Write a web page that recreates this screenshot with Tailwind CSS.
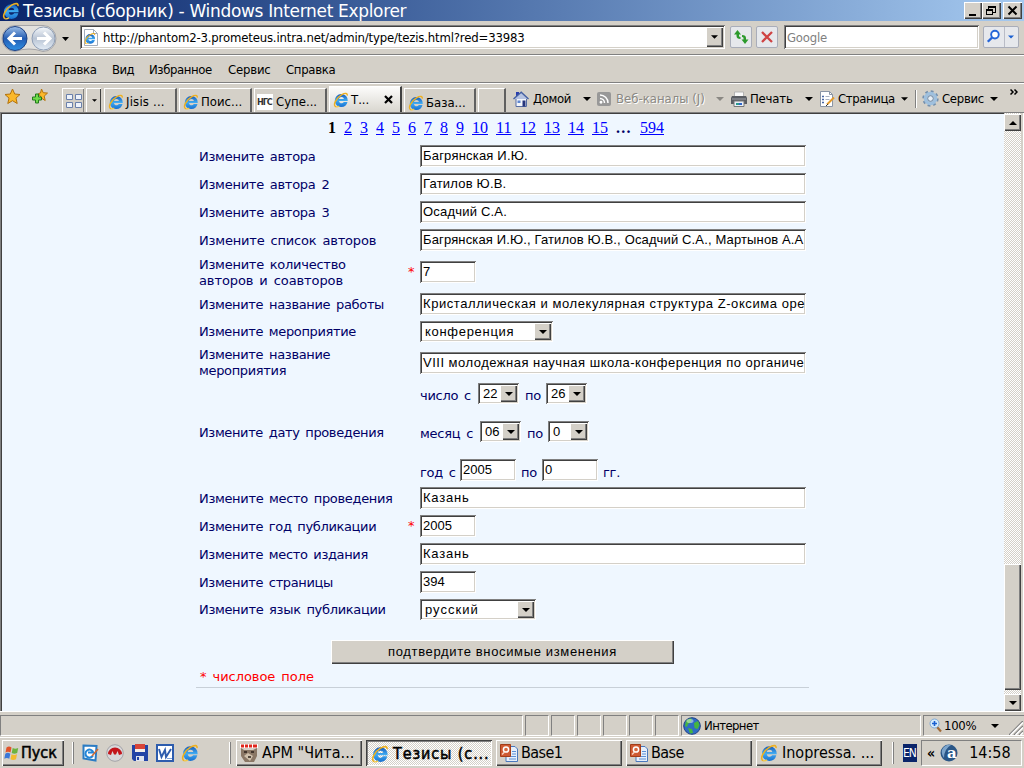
<!DOCTYPE html>
<html lang="ru">
<head>
<meta charset="utf-8">
<title>Тезисы (сборник)</title>
<script src="https://cdn.jsdelivr.net/npm/@tailwindcss/browser@4"></script>
</head>
<body class="w-[1024px] h-[768px] overflow-hidden bg-[#d4d0c8] text-black text-[13px] leading-4 whitespace-nowrap font-['DejaVu_Sans_Condensed','DejaVu_Sans',sans-serif]">

<!-- shared icons -->
<svg class="absolute w-0 h-0" xmlns="http://www.w3.org/2000/svg">
    <linearGradient id="ieblue" x2="0" y2="1"><stop stop-color="#1658b8"/><stop offset=".5" stop-color="#3fabf2"/><stop offset="1" stop-color="#176fd0"/></linearGradient>
    <symbol id="ie" viewBox="0 0 16 16">
        <path d="M8.300 2a6.500 6.500 0 0 1 6.500 7H6c.2 1.500 1.300 2.300 2.600 2.300 1 0 1.700-.4 2.200-1.200h3.700a6.500 6.500 0 0 1-6.200 5A6.500 6.500 0 0 1 8.300 2zM6 7h4.900C10.700 5.700 9.800 5 8.500 5S6.200 5.700 6 7z" fill="url(#ieblue)" fill-rule="evenodd"/>
        <path d="M3 14.900C-.8 13.800 3 6 8.500 2.800c3.500-2 6.300-1.900 5.700.8" fill="none" stroke="#eeb01f" stroke-width="1.400"/>
        <path d="M3 14.900c1 .2 2.200-.2 3.300-.9" fill="none" stroke="#f5c940" stroke-width="1.200"/>
    </symbol>
    <symbol id="down" viewBox="0 0 8 4"><path d="M0 0h8L4 4z" fill="currentColor"/></symbol>
    <symbol id="ppt" viewBox="0 0 18 18">
        <path d="M6 2.500h9l2.500 2.500V17.500H6z" fill="#e6effb" stroke="#4a78bd"/>
        <path d="M12 7.500h4M12 10h4M9 12.500h7M9 15h7" stroke="#5c8fd6"/>
        <path d="M.5.5h10v12H.5z" fill="#cf5a33" stroke="#a33c18"/>
        <circle cx="6" cy="5.500" r="2.600" fill="#d96a40" stroke="#fff" stroke-width="1.500"/>
        <path d="M2 10.500L4.500 8" stroke="#f8d2c0" stroke-width="1.500"/>
    </symbol>
</svg>

<!-- title bar -->
<div class="h-[21px] flex items-center pl-[2px] pr-[2px] bg-linear-to-r from-[#0a246a] to-[#a6caf0]">
    <svg class="w-[18px] h-[18px]"><use href="#ie"/></svg>
    <span class="ml-[3px] text-white text-[17px] leading-5 font-['DejaVu_Sans',sans-serif] tracking-[-0.33px]">Тезисы (сборник) - Windows Internet Explorer</span>
    <div class="ml-auto flex">
        <div class="w-[18px] h-[17px] bg-[#d4d0c8] shadow-[inset_1px_1px_#fff,inset_-1px_-1px_#404040,inset_-2px_-2px_#808080]">
            <svg class="w-[18px] h-[17px]"><path d="M5 12h7v2H5z"/></svg>
        </div>
        <div class="w-[19px] h-[17px] bg-[#d4d0c8] shadow-[inset_1px_1px_#fff,inset_-1px_-1px_#404040,inset_-2px_-2px_#808080]">
            <svg class="w-[19px] h-[17px]" fill="none" stroke="#000" shape-rendering="crispEdges"><path d="M6.500 7V4.500h7v6H11M6 5h8M4.500 7.500h6v5h-6zM4 8.500h7"/></svg>
        </div>
        <div class="ml-[2px] w-[19px] h-[17px] bg-[#d4d0c8] shadow-[inset_1px_1px_#fff,inset_-1px_-1px_#404040,inset_-2px_-2px_#808080]">
            <svg class="w-[19px] h-[17px]"><path d="M5.500 4.500l8 8M13.500 4.500l-8 8" stroke="#000" stroke-width="2"/></svg>
        </div>
    </div>
</div>

<!-- address bar -->
<div class="h-[34px] flex items-start pt-[4px] border-b border-[#808080]">
    <svg class="w-[75px] h-[28px] shrink-0" viewBox="0 0 75 28">
        <defs>
            <linearGradient id="back" x2="0" y2="1"><stop stop-color="#9fc0e8"/><stop offset=".5" stop-color="#235cb3"/><stop offset="1" stop-color="#2f90e4"/></linearGradient>
            <linearGradient id="fwd" x2="0" y2="1"><stop stop-color="#f5f8fc"/><stop offset=".5" stop-color="#b9c4d4"/><stop offset="1" stop-color="#e4edf6"/></linearGradient>
        </defs>
        <path d="M15 .5h28a13 13 0 0 1 0 26q-14-5-28 0a13 13 0 0 1 0-26z" fill="#e2e1de" stroke="#a5a5a8"/>
        <circle cx="15" cy="13.500" r="12" fill="url(#back)" stroke="#1d4185"/>
        <circle cx="43.500" cy="13.500" r="11.500" fill="url(#fwd)" stroke="#8d9db5"/>
        <path d="M22 13.500H10M15 7.500l-6 6 6 6" fill="none" stroke="#fff" stroke-width="3"/>
        <path d="M37 13.500h12M44 7.500l6 6-6 6" fill="none" stroke="#fff" stroke-width="3"/>
        <path d="M62 12h7l-3.500 4z"/>
    </svg>
    <div class="ml-[5px] w-[645px] h-[24px] p-[2px] flex items-center bg-white shadow-[inset_1px_1px_#808080,inset_-1px_-1px_#fff,inset_2px_2px_#404040,inset_-2px_-2px_#d4d0c8]">
        <svg class="ml-[1px] w-[16px] h-[17px]" viewBox="0 0 16 17">
            <path d="M1.500.5h9l4 4v12h-13z" fill="#fff" stroke="#a3adbb"/>
            <path d="M10.500.5v4h4" fill="none" stroke="#a3adbb"/>
            <use href="#ie" x="1" y="3.500" width="12" height="12"/>
        </svg>
        <span class="ml-[4px] pt-[2px] tracking-[-0.16px]">http://phantom2-3.prometeus.intra.net/admin/type/tezis.html?red=33983</span>
        <div class="ml-auto w-[17px] h-[20px] flex items-center justify-center bg-[#d4d0c8] shadow-[inset_1px_1px_#fff,inset_-1px_-1px_#404040,inset_-2px_-2px_#808080]">
            <svg class="w-[7px] h-[4px]"><use href="#down"/></svg>
        </div>
    </div>
    <div class="ml-[5px] mt-px w-[22px] h-[22px] rounded-[2px] border border-[#a9adb9] bg-[#e6e8ec]">
        <svg class="w-5 h-5" viewBox="0 0 20 20" fill="#2c9a2c">
            <path d="M3 7.500L6.500 3 10 7.500H8V9q0 1 1.500 1v2Q5.500 12 5.500 9V7.500z"/>
            <path d="M17.500 12.500L14 17l-3.500-4.500h2V11q0-1-1.500-1V8q4 0 4 3v1.500z"/>
        </svg>
    </div>
    <div class="ml-[4px] mt-px w-[22px] h-[22px] rounded-[2px] border border-[#a9adb9] bg-[#e6e8ec]">
        <svg class="w-5 h-5" viewBox="0 0 20 20"><path d="M5 5l10 10M15 5L5 15" stroke="#cf4343" stroke-width="2.300"/></svg>
    </div>
    <div class="ml-[6px] w-[195px] h-[24px] pl-[3px] pt-[2px] flex items-center bg-white text-[#808080] shadow-[inset_1px_1px_#808080,inset_-1px_-1px_#fff,inset_2px_2px_#404040,inset_-2px_-2px_#d4d0c8] tracking-[-0.2px]">Google</div>
    <div class="ml-[4px] mt-px w-[36px] h-[22px] flex items-center rounded-[2px] border border-[#a9adb9] bg-[#e6e8ec] text-[#1a5fd0]">
        <svg class="w-[21px] h-5 border-r border-[#b9bcc6]" viewBox="0 0 21 20" fill="none" stroke="#2565d8">
            <circle cx="11.500" cy="7.500" r="4" fill="#fff" stroke-width="2"/><path d="M8.500 10.500L4 15" stroke-width="2.500"/>
        </svg>
        <svg class="ml-[3px] w-[6px] h-[4px]"><use href="#down"/></svg>
    </div>
</div>

<!-- menu bar -->
<div class="h-[28px] pt-px flex items-center border-t border-t-white border-b border-b-[#808080]">
    <span class="ml-[7px] w-[47px] tracking-[-0.2px]">Файл</span>
    <span class="w-[58px] tracking-[-0.3px]">Правка</span>
    <span class="w-[37px] tracking-[-0.5px]">Вид</span>
    <span class="w-[79px] tracking-[-0.4px]">Избранное</span>
    <span class="w-[58px] tracking-[-0.2px]">Сервис</span>
    <span class="tracking-[-0.3px]">Справка</span>
</div>

<!-- tabs and command bar -->
<div class="h-[30px] flex items-end border-t border-white border-b border-b-[#808080]">
    <svg class="ml-[4px] mb-[7px] w-[17px] h-[17px]" viewBox="0 0 17 17"><path d="M8.500 1l2.200 5 5.300.5-4 3.600 1.200 5.400-4.700-2.800-4.700 2.800L5 10.100 1 6.500 6.300 6z" fill="#fbb829" stroke="#b3720c"/></svg>
    <svg class="ml-[10px] mb-[7px] w-[17px] h-[17px]" viewBox="0 0 17 17">
        <path d="M10.500 1l1.700 3.700 4.300.4-3.300 3 1 4.400-3.700-2.300-3-4.700 2-.5z" fill="#fbb829" stroke="#b3720c"/>
        <path d="M4.500 6h3v3h3v3h-3v3h-3v-3h-3V9h3z" fill="#6fdc4a" stroke="#237a1c"/>
    </svg>
    <div class="ml-[14px] w-[22px] h-[24px] flex items-center justify-center border-l border-t border-white shadow-[inset_-1px_0_#808080]">
        <svg class="w-[16px] h-[14px]" viewBox="0 0 16 14" fill="#eef3fb" stroke="#6a80ab"><path d="M.5.5h6v5h-6zM9.500.5h6v5h-6zM.5 8.500h6v5h-6zM9.500 8.500h6v5h-6z"/></svg>
    </div>
    <div class="ml-[2px] w-[15px] h-[24px] flex items-center justify-center border-l border-t border-white shadow-[inset_-1px_0_#404040]">
        <svg class="w-[5px] h-[3px]"><use href="#down"/></svg>
    </div>
    <div class="ml-[3px] w-[73px] h-[24px] pl-[3px] pt-[2px] flex items-center border-l border-t border-white border-r-2 border-r-[#606060]">
        <svg class="w-[16px] h-[16px] mr-[2px]"><use href="#ie"/></svg><span class="tracking-[0.2px]">Jisis ...</span>
    </div>
    <div class="ml-[2px] w-[73px] h-[24px] pl-[3px] pt-[2px] flex items-center border-l border-t border-white border-r-2 border-r-[#606060]">
        <svg class="w-[16px] h-[16px] mr-[2px]"><use href="#ie"/></svg>Поис...
    </div>
    <div class="ml-[2px] w-[73px] h-[24px] pl-[2px] pt-[2px] flex items-center border-l border-t border-white border-r-2 border-r-[#606060]">
        <span class="w-[16px] h-[16px] mr-[3px] bg-white text-[9px] leading-4 font-bold tracking-[-1.1px] text-[#333]">НГС</span>Супе...
    </div>
    <div class="ml-[2px] w-[73px] h-[26px] pl-[3px] flex items-center bg-linear-to-b from-[#fcfcfb] to-[#d9d6cf] border-l border-t border-white border-r-2 border-r-[#404040]">
        <svg class="w-[16px] h-[16px] mr-[2px]"><use href="#ie"/></svg>Т...
        <svg class="ml-auto mr-[7px] w-[9px] h-[9px]" viewBox="0 0 9 9"><path d="M1 1l7 7M8 1L1 8" stroke="#000" stroke-width="2.200"/></svg>
    </div>
    <div class="ml-[2px] w-[72px] h-[24px] pl-[3px] pt-[4px] flex items-center border-l border-t border-white border-r-2 border-r-[#606060]">
        <svg class="w-[16px] h-[16px] mr-[2px]"><use href="#ie"/></svg>База...
    </div>
    <div class="ml-[2px] w-[28px] h-[24px] border-l border-t border-white border-r-2 border-r-[#606060]"></div>
    <div class="ml-[7px] h-[27px] flex items-center">
        <svg class="w-[16px] h-[16px]" viewBox="0 0 16 16">
            <path d="M3 7.500h10.500v8H3z" fill="#f2f5fb" stroke="#566da5"/>
            <path d="M3 1h3v4H3z" fill="#2b3fae"/>
            <path d="M.5 8L8.200 1.200 15.500 8" fill="#b6c3e2" stroke="#4560a3" stroke-width="1.400"/>
            <path d="M4.500 9.500h3V12h-3z" fill="#5f86cf"/><path d="M9.500 9.500h3v6h-3z" fill="#26357a"/>
        </svg>
        <span class="ml-[4px] w-[50px] tracking-[-0.4px]">Домой</span>
        <svg class="w-[8px] h-[4px]"><use href="#down"/></svg>
        <svg class="ml-[6px] w-[14px] h-[14px]" viewBox="0 0 14 14" fill="none" stroke="#fff" stroke-width="1.500">
            <rect width="14" height="14" rx="2" fill="#989898" stroke="none"/>
            <path d="M3 6.500a4.500 4.500 0 0 1 4.500 4.500M3 3a8 8 0 0 1 8 8"/><circle cx="4" cy="10.300" r=".7"/>
        </svg>
        <span class="ml-[5px] w-[100px] text-[#8a8883] [text-shadow:1px_1px_#fff]">Веб-каналы (J)</span>
        <svg class="w-[8px] h-[4px] text-[#8a8883]"><use href="#down"/></svg>
        <svg class="ml-[7px] w-[16px] h-[16px]" viewBox="0 0 16 16">
            <path d="M3.500 1h9v5h-9z" fill="#fbfbfb" stroke="#b5b5b5"/>
            <path d="M1 5h14l1 2v6H0V7z" fill="#5a5d63"/><path d="M1 8h14" stroke="#9fa2a8"/>
            <path d="M3 10h10v5.500H3z" fill="#e9eef5" stroke="#777"/><path d="M5 12h3v2H5z" fill="#2b9a8c"/><path d="M8 12h3v2H8z" fill="#2f66c9"/>
        </svg>
        <span class="ml-[3px] w-[55px] tracking-[-0.2px]">Печать</span>
        <svg class="w-[8px] h-[4px]"><use href="#down"/></svg>
        <svg class="ml-[6px] w-[16px] h-[16px]" viewBox="0 0 16 16">
            <path d="M1.500.5h9l3 3v12h-12z" fill="#fff" stroke="#8a95a5"/><path d="M10.500.5v3h3" fill="none" stroke="#8a95a5"/>
            <path d="M3 5.500h2M3 8.500h2M3 11.500h2" stroke="#4a68a5" stroke-width="1.500"/><path d="M6.500 5.500h4M6.500 8.500h4" stroke="#a9b2c2"/>
            <path d="M8 13.500L15 6.500" stroke="#e39a2c" stroke-width="2"/><path d="M7 15l2-2" stroke="#333"/>
        </svg>
        <span class="ml-[3px] w-[63px] tracking-[-0.4px]">Страница</span>
        <svg class="w-[7px] h-[4px]"><use href="#down"/></svg>
        <div class="ml-[7px] w-[2px] h-[18px] border-l border-[#808080] bg-white"></div>
        <svg class="ml-[5px] w-[17px] h-[17px]" viewBox="0 0 17 17" fill="none">
            <circle cx="8.500" cy="8.500" r="7" stroke="#7590ad" stroke-width="2.400" stroke-dasharray="2.750 2.750"/>
            <circle cx="8.500" cy="8.500" r="5" stroke="#9fc0de" stroke-width="3.500"/>
            <circle cx="8.500" cy="8.500" r="2.800" fill="#e8eef4" stroke="#6a86a5"/>
        </svg>
        <span class="ml-[3px] w-[48px] tracking-[-0.3px]">Сервис</span>
        <svg class="w-[8px] h-[4px]"><use href="#down"/></svg>
        <svg class="ml-[12px] mb-[14px] w-[8px] h-[6px]" viewBox="0 0 8 6" fill="none" stroke="#000" stroke-width="1.500"><path d="M.5.5L3 3 .5 5.500M4.500.5L7 3 4.500 5.500"/></svg>
    </div>
</div>

<!-- page -->
<div class="h-[598px] flex border-l border-[#808080] bg-[#eff7ff]">
    <div class="w-[1003px] pl-[194px] border-l border-t border-[#404040]">
        <div class="h-[28px] pl-[132px] pt-[5px] flex gap-[8px] font-['Liberation_Serif',serif] text-base leading-[18px] text-[#00f]">
            <b class="text-black">1</b>
            <u>2</u><u>3</u><u>4</u><u>5</u><u>6</u><u>7</u><u>8</u><u>9</u><u>10</u><u class="w-[16px]">11</u><u>12</u><u>13</u><u>14</u><u>15</u>
            <b class="text-[#000066] w-[16px] tracking-[1.300px]">...</b>
            <u>594</u>
        </div>

        <div class="w-[613px] pl-[3px] text-[#000066] font-['DejaVu_Sans',sans-serif] text-[13px] tracking-[-0.26px] [word-spacing:2px] border-b border-[#c8d0d8]">
            <div class="h-[28px] flex items-center">
                <span class="w-[221px] pt-[2px]">Измените автора</span>
                <div class="w-[386px] h-[22px] px-[3px] py-[3px] overflow-hidden bg-white text-black font-['Liberation_Sans',sans-serif] [word-spacing:0] tracking-[0.2px] shadow-[inset_1px_1px_#808080,inset_-1px_-1px_#fff,inset_2px_2px_#404040,inset_-2px_-2px_#d4d0c8]">Багрянская И.Ю.</div>
            </div>
            <div class="h-[28px] flex items-center">
                <span class="w-[221px] pt-[2px]">Измените автора 2</span>
                <div class="w-[386px] h-[22px] px-[3px] py-[3px] overflow-hidden bg-white text-black font-['Liberation_Sans',sans-serif] [word-spacing:0] tracking-[0.2px] shadow-[inset_1px_1px_#808080,inset_-1px_-1px_#fff,inset_2px_2px_#404040,inset_-2px_-2px_#d4d0c8]">Гатилов Ю.В.</div>
            </div>
            <div class="h-[28px] flex items-center">
                <span class="w-[221px] pt-[2px]">Измените автора 3</span>
                <div class="w-[386px] h-[22px] px-[3px] py-[3px] overflow-hidden bg-white text-black font-['Liberation_Sans',sans-serif] [word-spacing:0] tracking-[0.2px] shadow-[inset_1px_1px_#808080,inset_-1px_-1px_#fff,inset_2px_2px_#404040,inset_-2px_-2px_#d4d0c8]">Осадчий С.А.</div>
            </div>
            <div class="h-[28px] flex items-center">
                <span class="w-[221px] pt-[2px] tracking-[-0.18px]">Измените список авторов</span>
                <div class="w-[386px] h-[22px] pl-[3px] py-[3px] overflow-hidden bg-white text-black font-['Liberation_Sans',sans-serif] [word-spacing:0] tracking-[0.14px] shadow-[inset_1px_1px_#808080,inset_-1px_-1px_#fff,inset_2px_2px_#404040,inset_-2px_-2px_#d4d0c8]">Багрянская И.Ю., Гатилов Ю.В., Осадчий С.А., Мартынов А.А</div>
            </div>
            <div class="h-[36px] flex items-center">
                <span class="w-[208px] pt-[2px]">Измените количество<br><span class="tracking-[-0.1px]">авторов и соавторов</span></span>
                <span class="w-[13px] pl-px text-[#f00]">*</span>
                <div class="w-[56px] h-[22px] px-[3px] py-[3px] bg-white text-black font-['Liberation_Sans',sans-serif] tracking-normal shadow-[inset_1px_1px_#808080,inset_-1px_-1px_#fff,inset_2px_2px_#404040,inset_-2px_-2px_#d4d0c8]">7</div>
            </div>
            <div class="h-[28px] flex items-center">
                <span class="w-[221px] pt-[2px] tracking-[-0.34px]">Измените название работы</span>
                <div class="w-[386px] h-[22px] pl-[3px] py-[3px] overflow-hidden bg-white text-black font-['Liberation_Sans',sans-serif] [word-spacing:0] tracking-[0.57px] shadow-[inset_1px_1px_#808080,inset_-1px_-1px_#fff,inset_2px_2px_#404040,inset_-2px_-2px_#d4d0c8]">Кристаллическая и молекулярная структура Z-оксима оре</div>
            </div>
            <div class="h-[27px] flex items-center">
                <span class="w-[221px] tracking-[-0.36px]">Измените мероприятие</span>
                <div class="w-[133px] h-[21px] p-[2px] pl-[5px] flex items-center justify-between bg-white text-black font-['Liberation_Sans',sans-serif] tracking-[0.7px] shadow-[inset_1px_1px_#808080,inset_-1px_-1px_#fff,inset_2px_2px_#404040,inset_-2px_-2px_#d4d0c8]">
                    конференция
                    <div class="w-[17px] h-[17px] flex items-center justify-center bg-[#d4d0c8] shadow-[inset_1px_1px_#fff,inset_-1px_-1px_#404040,inset_-2px_-2px_#808080]"><svg class="w-[8px] h-[4px]"><use href="#down"/></svg></div>
                </div>
            </div>
            <div class="h-[35px] flex items-center">
                <span class="w-[221px] tracking-[-0.34px]">Измените название<br>мероприятия</span>
                <div class="w-[386px] h-[22px] pl-[3px] py-[3px] overflow-hidden bg-white text-black font-['Liberation_Sans',sans-serif] [word-spacing:0] tracking-[0.5px] shadow-[inset_1px_1px_#808080,inset_-1px_-1px_#fff,inset_2px_2px_#404040,inset_-2px_-2px_#d4d0c8]">VIII молодежная научная школа-конференция по органиче</div>
            </div>
            <div class="h-[104px] flex items-center">
                <span class="w-[221px] pt-[2px] tracking-[-0.37px]">Измените дату проведения</span>
                <div class="flex flex-col gap-[17px]">
                    <div class="h-[21px] flex items-start">
                        <span class="w-[58px] pt-[5px]">число с</span>
                        <div class="w-[41px] h-[21px] p-[2px] pl-[5px] flex items-center justify-between bg-white text-black font-['Liberation_Sans',sans-serif] tracking-normal shadow-[inset_1px_1px_#808080,inset_-1px_-1px_#fff,inset_2px_2px_#404040,inset_-2px_-2px_#d4d0c8]">
                            22
                            <div class="w-[17px] h-[17px] flex items-center justify-center bg-[#d4d0c8] shadow-[inset_1px_1px_#fff,inset_-1px_-1px_#404040,inset_-2px_-2px_#808080]"><svg class="w-[8px] h-[4px]"><use href="#down"/></svg></div>
                        </div>
                        <span class="ml-[6px] w-[21px] pt-[5px]">по</span>
                        <div class="w-[41px] h-[21px] p-[2px] pl-[5px] flex items-center justify-between bg-white text-black font-['Liberation_Sans',sans-serif] tracking-normal shadow-[inset_1px_1px_#808080,inset_-1px_-1px_#fff,inset_2px_2px_#404040,inset_-2px_-2px_#d4d0c8]">
                            26
                            <div class="w-[17px] h-[17px] flex items-center justify-center bg-[#d4d0c8] shadow-[inset_1px_1px_#fff,inset_-1px_-1px_#404040,inset_-2px_-2px_#808080]"><svg class="w-[8px] h-[4px]"><use href="#down"/></svg></div>
                        </div>
                    </div>
                    <div class="h-[21px] flex items-start">
                        <span class="w-[60px] pt-[5px]">месяц с</span>
                        <div class="w-[41px] h-[21px] p-[2px] pl-[5px] flex items-center justify-between bg-white text-black font-['Liberation_Sans',sans-serif] tracking-normal shadow-[inset_1px_1px_#808080,inset_-1px_-1px_#fff,inset_2px_2px_#404040,inset_-2px_-2px_#d4d0c8]">
                            06
                            <div class="w-[17px] h-[17px] flex items-center justify-center bg-[#d4d0c8] shadow-[inset_1px_1px_#fff,inset_-1px_-1px_#404040,inset_-2px_-2px_#808080]"><svg class="w-[8px] h-[4px]"><use href="#down"/></svg></div>
                        </div>
                        <span class="ml-[6px] w-[21px] pt-[5px]">по</span>
                        <div class="w-[41px] h-[21px] p-[2px] pl-[5px] flex items-center justify-between bg-white text-black font-['Liberation_Sans',sans-serif] tracking-normal shadow-[inset_1px_1px_#808080,inset_-1px_-1px_#fff,inset_2px_2px_#404040,inset_-2px_-2px_#d4d0c8]">
                            0
                            <div class="w-[17px] h-[17px] flex items-center justify-center bg-[#d4d0c8] shadow-[inset_1px_1px_#fff,inset_-1px_-1px_#404040,inset_-2px_-2px_#808080]"><svg class="w-[8px] h-[4px]"><use href="#down"/></svg></div>
                        </div>
                    </div>
                    <div class="h-[22px] flex items-start">
                        <span class="w-[40px] pt-[6px]">год с</span>
                        <div class="w-[56px] h-[22px] px-[3px] py-[3px] bg-white text-black font-['Liberation_Sans',sans-serif] tracking-normal shadow-[inset_1px_1px_#808080,inset_-1px_-1px_#fff,inset_2px_2px_#404040,inset_-2px_-2px_#d4d0c8]">2005</div>
                        <span class="ml-[5px] w-[21px] pt-[6px]">по</span>
                        <div class="w-[56px] h-[22px] px-[3px] py-[3px] bg-white text-black font-['Liberation_Sans',sans-serif] tracking-normal shadow-[inset_1px_1px_#808080,inset_-1px_-1px_#fff,inset_2px_2px_#404040,inset_-2px_-2px_#d4d0c8]">0</div>
                        <span class="ml-[5px] pt-[6px]">гг.</span>
                    </div>
                </div>
            </div>
            <div class="h-[28px] flex items-center">
                <span class="w-[221px] pt-[2px] tracking-[-0.33px]">Измените место проведения</span>
                <div class="w-[386px] h-[22px] px-[3px] py-[3px] bg-white text-black font-['Liberation_Sans',sans-serif] tracking-[0.8px] shadow-[inset_1px_1px_#808080,inset_-1px_-1px_#fff,inset_2px_2px_#404040,inset_-2px_-2px_#d4d0c8]">Казань</div>
            </div>
            <div class="h-[28px] flex items-center">
                <span class="w-[208px] pt-[2px] tracking-[-0.36px]">Измените год публикации</span>
                <span class="w-[13px] pl-px text-[#f00]">*</span>
                <div class="w-[56px] h-[22px] px-[3px] py-[3px] bg-white text-black font-['Liberation_Sans',sans-serif] tracking-normal shadow-[inset_1px_1px_#808080,inset_-1px_-1px_#fff,inset_2px_2px_#404040,inset_-2px_-2px_#d4d0c8]">2005</div>
            </div>
            <div class="h-[28px] flex items-center">
                <span class="w-[221px] pt-[2px] tracking-[-0.36px]">Измените место издания</span>
                <div class="w-[386px] h-[22px] px-[3px] py-[3px] bg-white text-black font-['Liberation_Sans',sans-serif] tracking-[0.8px] shadow-[inset_1px_1px_#808080,inset_-1px_-1px_#fff,inset_2px_2px_#404040,inset_-2px_-2px_#d4d0c8]">Казань</div>
            </div>
            <div class="h-[28px] flex items-center">
                <span class="w-[221px] pt-[2px] tracking-[-0.36px]">Измените страницы</span>
                <div class="w-[56px] h-[22px] px-[3px] py-[3px] bg-white text-black font-['Liberation_Sans',sans-serif] tracking-normal shadow-[inset_1px_1px_#808080,inset_-1px_-1px_#fff,inset_2px_2px_#404040,inset_-2px_-2px_#d4d0c8]">394</div>
            </div>
            <div class="h-[27px] flex items-center">
                <span class="w-[221px] tracking-[-0.33px]">Измените язык публикации</span>
                <div class="w-[116px] h-[21px] p-[2px] pl-[5px] flex items-center justify-between bg-white text-black font-['Liberation_Sans',sans-serif] tracking-[1px] shadow-[inset_1px_1px_#808080,inset_-1px_-1px_#fff,inset_2px_2px_#404040,inset_-2px_-2px_#d4d0c8]">
                    русский
                    <div class="w-[17px] h-[17px] flex items-center justify-center bg-[#d4d0c8] shadow-[inset_1px_1px_#fff,inset_-1px_-1px_#404040,inset_-2px_-2px_#808080]"><svg class="w-[8px] h-[4px]"><use href="#down"/></svg></div>
                </div>
            </div>
            <button class="block mt-[17px] ml-[132px] w-[343px] h-[24px] bg-[#d4d0c8] text-black text-[13px] font-['Liberation_Sans',sans-serif] [word-spacing:0] tracking-[0.65px] shadow-[inset_1px_1px_#fff,inset_-1px_-1px_#404040,inset_-2px_-2px_#808080]">подтвердите вносимые изменения</button>
            <div class="mt-[5px] h-[18px] pl-[1px] tracking-[-0.05px] text-[#f00]">* числовое поле</div>
        </div>
    </div>

    <!-- scrollbar -->
    <div class="w-[17px] pt-px flex flex-col bg-[conic-gradient(#fff_25%,#d4d0c8_0_50%,#fff_0_75%,#d4d0c8_0)] bg-[length:2px_2px]">
        <div class="h-[17px] flex items-center justify-center bg-[#d4d0c8] shadow-[inset_1px_1px_#fff,inset_-1px_-1px_#404040,inset_-2px_-2px_#808080]"><svg class="w-[8px] h-[4px] rotate-180"><use href="#down"/></svg></div>
        <div class="mt-[433px] h-[126px] bg-[#d4d0c8] shadow-[inset_1px_1px_#fff,inset_-1px_-1px_#404040,inset_-2px_-2px_#808080]"></div>
        <div class="mt-auto h-[17px] flex items-center justify-center bg-[#d4d0c8] shadow-[inset_1px_1px_#fff,inset_-1px_-1px_#404040,inset_-2px_-2px_#808080]"><svg class="w-[8px] h-[4px]"><use href="#down"/></svg></div>
    </div>
    <div class="w-[3px] bg-[#d4d0c8] border-r border-white"></div>
</div>

<!-- status bar -->
<div class="h-[26px] pt-[3px] flex gap-[2px] border-t border-white">
    <div class="w-[523px] h-[21px] border border-[#808080] border-r-white border-b-white"></div>
    <div class="w-[24px] h-[21px] border border-[#808080] border-r-white border-b-white"></div>
    <div class="w-[24px] h-[21px] border border-[#808080] border-r-white border-b-white"></div>
    <div class="w-[24px] h-[21px] border border-[#808080] border-r-white border-b-white"></div>
    <div class="w-[24px] h-[21px] border border-[#808080] border-r-white border-b-white"></div>
    <div class="w-[24px] h-[21px] border border-[#808080] border-r-white border-b-white"></div>
    <div class="w-[24px] h-[21px] border border-[#808080] border-r-white border-b-white"></div>
    <div class="w-[240px] h-[21px] pl-[1px] flex items-center border border-[#808080] border-r-white border-b-white">
        <svg class="w-[18px] h-[18px]" viewBox="0 0 18 18">
            <circle cx="9" cy="9" r="8.300" fill="#2f6cc4" stroke="#1d3f86"/>
            <path d="M3 4c2-2 4-3 6-2l-1 3-3 2-1 3-2-1zM11 6l4-2 1.500 4-2 4-3-1zM5 11l4 1 1 4-3 .5z" fill="#46b63f"/>
            <ellipse cx="7" cy="4" rx="3.500" ry="2" fill="#fff" opacity=".45"/>
        </svg>
        <span class="ml-[3px] tracking-[-0.6px]">Интернет</span>
    </div>
    <div class="w-[101px] h-[21px] pl-[5px] flex items-center border border-[#808080] border-r-0 border-b-white">
        <svg class="w-[13px] h-[15px]" viewBox="0 0 13 15" fill="none">
            <path d="M8 9l4 4.500" stroke="#a06a38" stroke-width="2.200"/><circle cx="5.500" cy="5.500" r="4.500" fill="#d6ebfc" stroke="#7fa9d6"/>
            <path d="M3 5.500h5M5.500 3v5" stroke="#1a5fd0" stroke-width="1.600"/>
        </svg>
        <span class="ml-[2px] w-[47px] tracking-[-0.3px]">100%</span>
        <svg class="w-[8px] h-[4px]"><use href="#down"/></svg>
        <svg class="ml-auto mr-[1px] w-[14px] h-[14px] self-end" viewBox="0 0 14 14" stroke-width="1.500"><path d="M0 14L14 0M5 14l9-9M10 14l4-4" stroke="#808080"/><path d="M1.500 14L14 1.500M6.500 14L14 6.500M11.500 14l2.500-2.500" stroke="#fff"/></svg>
    </div>
</div>

<!-- taskbar -->
<div class="h-[31px] pt-[2px] flex border-t border-white text-[16px]">
    <div class="ml-[2px] w-[62px] h-[26px] pl-[2px] flex items-center shadow-[inset_1px_1px_#fff,inset_-1px_-1px_#404040,inset_-2px_-2px_#808080]">
        <svg class="w-[16px] h-[16px]" viewBox="0 0 16 16">
            <path d="M2.500 2.500q2.500-1.800 5 0l-1 5q-2.500-1.500-5 0z" fill="#e2532a"/><path d="M8.700 3q2.500 1.500 5.500 0l-1 5q-2.800 1.600-5.500 0z" fill="#6cb33e"/>
            <path d="M1.300 8.700q2.500-1.800 5 0l-1 5q-2.500-1.500-5 0z" fill="#3b78d8"/><path d="M7.500 9.200q2.500 1.500 5.500 0l-1 5q-2.800 1.600-5.500 0z" fill="#f3bb2c"/>
        </svg>
        <span class="ml-[1px] text-[16px] [-webkit-text-stroke:0.5px_#000]">Пуск</span>
    </div>
    <div class="ml-[8px] mt-[2px] w-[2px] h-[22px] border-l border-white bg-[#808080]"></div>
    <div class="ml-[7px] w-[148px] h-[26px] flex items-center gap-[7px]">
        <svg class="w-[18px] h-[18px]" viewBox="0 0 18 18">
            <path d="M2.500 1.500l13 .5-1 14.500-12-2z" fill="#fff" stroke="#2b7cc4" stroke-width="2"/>
            <path d="M12 11.500A4 4 0 1 1 12.300 8.500H7" fill="none" stroke="#2486d8" stroke-width="2"/><path d="M11 12l6-7" stroke="#d06a32" stroke-width="1.600"/>
        </svg>
        <svg class="w-[18px] h-[18px]" viewBox="0 0 18 18">
            <circle cx="9" cy="9" r="8.300" fill="#d8d8da" stroke="#a3a3a8"/>
            <path d="M2 10a7 6.500 0 0 1 14 0l-3 1-1.500-4-1.500 3.500H8L6.500 7 5 11z" fill="#c3161c"/>
        </svg>
        <svg class="w-[18px] h-[18px]" viewBox="0 0 18 18">
            <path d="M1 1h16v16H3l-2-2z" fill="#2243a6"/><path d="M4 0h10v5H4z" fill="#d84438"/><path d="M4 5h10v3H4z" fill="#f1ece9"/><path d="M5 12h8v5H5z" fill="#dfe3ee"/><path d="M6 13h2v3H6z" fill="#2243a6"/>
        </svg>
        <svg class="w-[18px] h-[18px]" viewBox="0 0 18 18">
            <path d="M1 1h16v16H1z" fill="#fff" stroke="#2d5cad" stroke-width="2"/>
            <path d="M3 5l2.500 8L9 6l1 7 5-8" fill="none" stroke="#2d5cad" stroke-width="1.900"/><path d="M11 14.500h5" stroke="#7fa3dd"/>
        </svg>
        <svg class="w-[18px] h-[18px]"><use href="#ie"/></svg>
    </div>
    <div class="mt-[2px] w-[2px] h-[22px] border-l border-white bg-[#808080]"></div>
    <div class="ml-[5px] flex gap-[4px]">
        <div class="w-[126px] h-[26px] pl-[4px] flex items-center shadow-[inset_1px_1px_#fff,inset_-1px_-1px_#404040,inset_-2px_-2px_#808080]">
            <svg class="w-[18px] h-[18px]" viewBox="0 0 18 18">
                <path d="M1 4l3 2h9l4-2v8l-3 6H5L1 12z" fill="#8a7765"/><path d="M4 12l4-3 5 3-3 5z" fill="#cfc0ab"/><path d="M4 8h3M11 8h3M8 13h3" stroke="#2b211a" stroke-width="1.600"/>
                <path d="M0 0h18v4H0z" fill="#fff"/><path d="M1 2h3M5 2h3M9 2h3M13 2h4" stroke="#e0261c" stroke-width="3"/>
            </svg>
            <span class="ml-[4px]">АРМ "Чита...</span>
        </div>
        <div class="w-[126px] h-[26px] pl-[5px] pt-[2px] flex items-center bg-[conic-gradient(#fff_25%,#d4d0c8_0_50%,#fff_0_75%,#d4d0c8_0)] bg-[length:2px_2px] shadow-[inset_1px_1px_#404040,inset_-1px_-1px_#fff,inset_2px_2px_#808080]">
            <svg class="w-[18px] h-[18px]"><use href="#ie"/></svg>
            <span class="ml-[4px] tracking-[0.9px] [-webkit-text-stroke:0.5px_#000]">Тезисы (с...</span>
        </div>
        <div class="w-[126px] h-[26px] pl-[4px] flex items-center shadow-[inset_1px_1px_#fff,inset_-1px_-1px_#404040,inset_-2px_-2px_#808080]">
            <svg class="w-[18px] h-[18px]"><use href="#ppt"/></svg>
            <span class="ml-[3px] tracking-[-0.6px]">Base1</span>
        </div>
        <div class="w-[126px] h-[26px] pl-[4px] flex items-center shadow-[inset_1px_1px_#fff,inset_-1px_-1px_#404040,inset_-2px_-2px_#808080]">
            <svg class="w-[18px] h-[18px]"><use href="#ppt"/></svg>
            <span class="ml-[3px] tracking-[-0.6px]">Base</span>
        </div>
        <div class="w-[126px] h-[26px] pl-[4px] flex items-center shadow-[inset_1px_1px_#fff,inset_-1px_-1px_#404040,inset_-2px_-2px_#808080]">
            <svg class="w-[18px] h-[18px]"><use href="#ie"/></svg>
            <span class="ml-[4px]">Inopressa. ...</span>
        </div>
    </div>
    <div class="ml-[10px] mt-[2px] w-[2px] h-[22px] border-l border-white bg-[#808080]"></div>
    <div class="ml-[9px] mt-[4px] w-[14px] h-[18px] bg-[#0a246a] text-white text-[12px] leading-[18px] tracking-[-1.1px]">EN</div>
    <div class="ml-[4px] w-[101px] h-[26px] pl-[5px] flex items-center border border-[#808080] border-r-white border-b-white">
        <b class="text-[14px]">«</b>
        <svg class="ml-[5px] w-[19px] h-[18px]" viewBox="0 0 19 18">
            <circle cx="9" cy="9" r="8.500" fill="#2a5687"/><path d="M2 6a8 8 0 0 1 9-5Q4 5 4 14 1 10 2 6z" fill="#7da5cc"/>
            <text x="7" y="14" font-family="DejaVu Serif" font-weight="bold" font-size="15" fill="#fff">a</text>
        </svg>
        <span class="ml-[10px]">14:58</span>
    </div>
</div>
</body>
</html>
